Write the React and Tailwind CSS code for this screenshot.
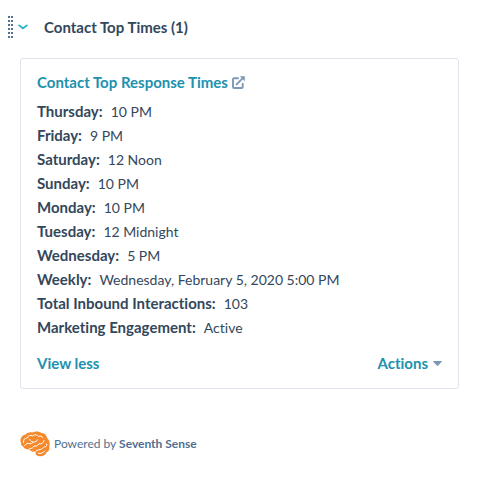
import React, { useState } from 'react';

const responseTimes = [
  { label: 'Thursday', value: '10 PM' },
  { label: 'Friday', value: '9 PM' },
  { label: 'Saturday', value: '12 Noon' },
  { label: 'Sunday', value: '10 PM' },
  { label: 'Monday', value: '10 PM' },
  { label: 'Tuesday', value: '12 Midnight' },
  { label: 'Wednesday', value: '5 PM' },
  { label: 'Weekly', value: 'Wednesday, February 5, 2020 5:00 PM' },
  { label: 'Total Inbound Interactions', value: '103' },
  { label: 'Marketing Engagement', value: 'Active' },
];

const DragHandle = () => (
  <svg className="w-[5px] h-[22px] text-[#516f90]" viewBox="0 0 5 22" fill="currentColor" shapeRendering="crispEdges">
    {[0, 4, 8, 12, 16, 20].map((y) => (
      <g key={y}>
        <rect x="0" y={y} width="2" height="2" />
        <rect x="3" y={y} width="2" height="2" />
      </g>
    ))}
  </svg>
);

const ChevronIcon = () => (
  <svg className="w-[10px] h-[6px] text-[#1fb0c4]" viewBox="0 0 10 6" fill="none" stroke="currentColor">
    <path d="M1.200 1.400L5 4.400L8.800 1.400" strokeWidth="1.800" strokeLinecap="round" strokeLinejoin="round" />
  </svg>
);

const ExternalLinkIcon = () => (
  <svg className="w-[13px] h-[13px] text-[#7c98b6]" viewBox="0 0 13 13" fill="none" stroke="currentColor">
    <path d="M6 2.300H2Q1 2.300 1 3.300V11Q1 12 2 12H9.700Q10.700 12 10.700 11V7.600" strokeWidth="1.900" strokeLinecap="round" />
    <path d="M4.600 8.400L10.800 2.200" strokeWidth="1.900" strokeLinecap="round" />
    <path d="M7.800 0.200H12.800V5.200Z" fill="currentColor" stroke="none" />
  </svg>
);

const BrainLogo = () => (
  <svg className="w-[30px] h-[26px]" viewBox="0 0 30 26" fill="none">
    <path
      d="M1 12C-.6 8 2 4.200 5.500 3.600C7.500 1.200 10.500.8 12.500 1.400C15.500-.2 19.500.2 21.500 2C24.500 2 26.800 4.200 27 7C29.600 9 30.200 12.500 29.300 15.500C30 18.500 28.500 20.600 26.500 21.200C25.500 24.500 22 25.800 18.500 25C15.500 24.500 15.500 22 15.500 20.500C12.500 21.500 10 20 9.500 18.300C6 18.800 3.500 17.500 3.200 15.600C1.500 15 .8 13.500 1 12Z"
      fill="#f5892b"
    />
    <g stroke="#fff" strokeWidth="1" strokeLinecap="round" strokeLinejoin="round">
      <path d="M3.500 11.500C3.200 8.500 5 6.800 7.300 7C8.300 4.500 10.500 3.800 12.500 4.800C14.500 3.300 17.500 3.400 18.500 5.500C20 4.600 22 5 22.800 6.500" />
      <path d="M4.500 14.500C6 12.500 8 12 10 12.600C11.500 13 12.500 12.300 12.700 11C15 11.500 17 10.200 17.500 8.800" />
      <path d="M9.800 8.500C10.200 9.800 11.300 10.800 12.700 11" />
      <path d="M9.800 17.500C12 17.700 13.500 16.500 14 15C16.500 15.500 18.300 14.300 18.800 12.800C21.300 13.400 23.700 12 24 9.500" />
      <path d="M15.700 20.300C17.500 18.300 19.800 19 21.500 18C23 17.200 23 16.200 24.800 15.900C26.200 15.600 27 14.500 26.700 13" />
      <path d="M18.500 22.300C20.500 22.800 23.500 22 24.600 20" />
    </g>
  </svg>
);

const App = () => {
  const [isOpen, setIsOpen] = useState(true);
  const [showAll, setShowAll] = useState(true);

  const rows = showAll ? responseTimes : responseTimes.slice(0, 3);

  return (
    <main className="min-h-screen bg-white pt-4 text-sm text-[#33475b] font-['Lato','Open_Sans',sans-serif] [font-variant-ligatures:none]">
      {/* Section header */}
      <header className="flex items-center pl-2">
        <DragHandle />
        <h2 className="font-bold">
          <button
            type="button"
            aria-expanded={isOpen}
            onClick={() => setIsOpen(!isOpen)}
            className="flex items-center gap-4 pl-[5px] text-[15px] leading-5"
          >
            <ChevronIcon />
            Contact Top Times (1)
          </button>
        </h2>
      </header>

      {isOpen && (
        <section className="mx-5 mt-5 rounded-[3px] border border-[#dfe3eb] px-4 pt-[11px] pb-[13px]">
          <a href="#response-times" className="flex items-center gap-1 leading-6 font-bold text-[15px] text-[#2091ae]">
            Contact Top Response Times
            <ExternalLinkIcon />
          </a>

          {/* Response times */}
          <dl className="mt-[5px] leading-6">
            {rows.map((row) => (
              <div key={row.label} className="flex h-6 items-baseline gap-2">
                <dt className="font-bold text-[15px]">{row.label}:</dt>
                <dd>{row.value}</dd>
              </div>
            ))}
          </dl>

          {/* Card actions */}
          <div className="mt-3 flex items-center justify-between text-[15px] leading-6 font-bold text-[#2091ae]">
            <button type="button" onClick={() => setShowAll(!showAll)}>
              {showAll ? 'View less' : 'View more'}
            </button>
            <button type="button" aria-haspopup="menu" className="flex items-center gap-[5px]">
              Actions
              <svg className="w-[9px] h-[5px] text-[#7c98b6]" viewBox="0 0 9 5" fill="currentColor">
                <path d="M0.500 0H8.500Q9 0.300 8.700 0.700L5 4.700Q4.500 5 4 4.700L0.300 0.700Q0 0.300 0.500 0Z" />
              </svg>
            </button>
          </div>
        </section>
      )}

      <footer className="flex items-center gap-1 px-5 pt-[42px] text-xs text-[#516f90]">
        <BrainLogo />
        <p>
          Powered by <strong className="font-bold">Seventh Sense</strong>
        </p>
      </footer>
    </main>
  );
};

export default App;
